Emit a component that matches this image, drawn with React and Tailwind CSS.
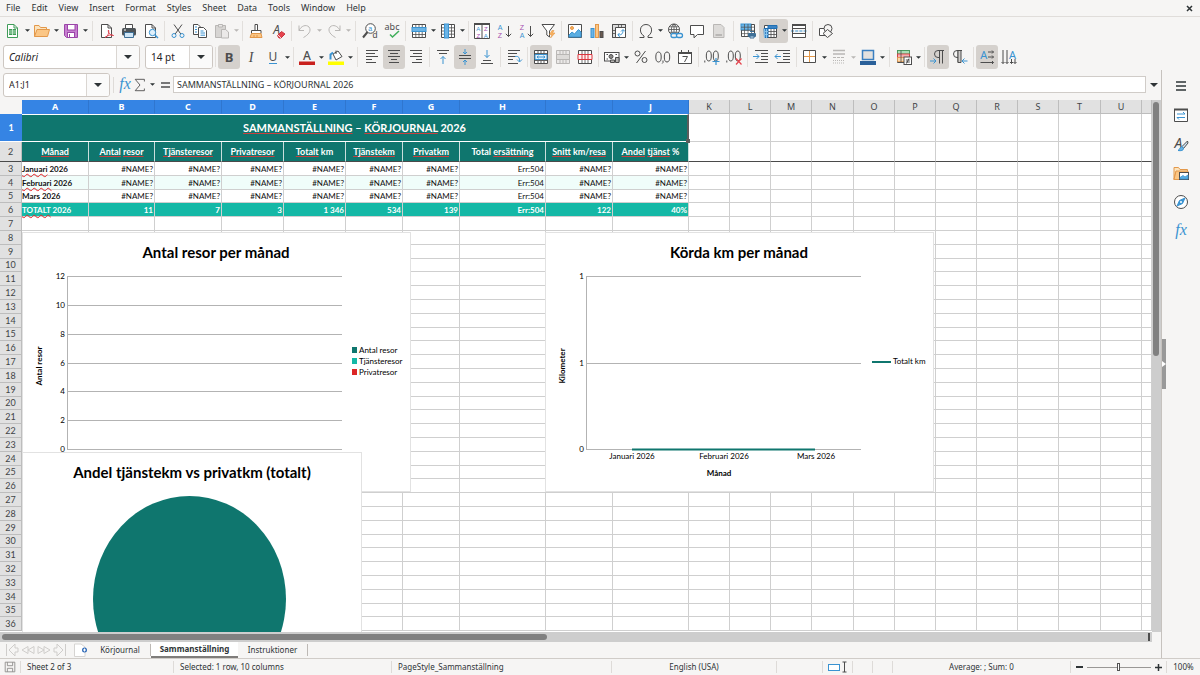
import { Fragment } from "react";
import clsx from "clsx";

const DARK = "#4d4d4d";
const BLUE = "#3a93d1";
const GREY = "#b9b7b5";

const menus = ["File", "Edit", "View", "Insert", "Format", "Styles", "Sheet", "Data", "Tools", "Window", "Help"];

const Glyph = ({ x = 8, y = 13, size = 14, fill = DARK, children, ...rest }) => (
  <text x={x} y={y} fontSize={size} fill={fill} stroke="none" textAnchor="middle" {...rest}>
    {children}
  </text>
);

const SmallGlyph = (props) => <Glyph size={7} className="font-['Liberation_Sans',sans-serif]" {...props} />;

const lines = (list) => list.map(([x1, x2, y]) => `M${x1} ${y}H${x2}`).join("");

const icons = {
  new: (
    <>
      <path d="M2.500 1.500H9l3.500 3.500V14.500H2.500Z" fill="#fff" stroke="#3f9c58" />
      <path d="M9 1.500V5h3.500" stroke="#3f9c58" />
      <rect x="4" y="6" width="7" height="6" fill="#3f9c58" stroke="none" />
      <path d="M4 8h7M4 10h7M7.500 6v6" stroke="#d4f0da" strokeWidth=".8" />
    </>
  ),
  open: (
    <>
      <path d="M.5 13.500V2.500H5l1.500 2H12.500V7" fill="#fbe3bd" stroke="#e3984a" />
      <path d="M.5 13.500 3 6.500H15.500L13.500 13.500Z" fill="#fbc685" stroke="#e3984a" />
    </>
  ),
  save: (
    <>
      <path d="M1.500 1.500H14.500V14.500H3.500L1.500 12.500Z" fill="#c77fd0" stroke="#9b45a8" />
      <rect x="4.500" y="1.500" width="7.500" height="5.500" fill="#fff" stroke="#9b45a8" />
      <rect x="4.500" y="9.500" width="7" height="5" fill="#fff" stroke="#9b45a8" />
      <path d="M6.500 11v3" stroke="#9b45a8" />
    </>
  ),
  pdf: (
    <>
      <path d="M2.500 1.500H9l3.500 3.500V14.500H2.500Z" fill="#fff" />
      <path d="M9 1.500V5h3.500" />
      <path d="M6 14.500c4-2 4-6 3.500-7.500-1 2 2 6 5 5.500-2-1.500-6 0-8.500 2" stroke="#dd3d4b" />
    </>
  ),
  print: (
    <>
      <path d="M4.500 5V1.500h7V5" fill="#fff" />
      <rect x="1" y="5" width="14" height="7.500" rx="1.500" fill="#4d5357" stroke="none" />
      <path d="M3.500 9.500h9v5h-9z" fill="#cfe6f7" stroke="#3e6f96" />
      <path d="M3 7h2" stroke="#fff" />
    </>
  ),
  preview: (
    <>
      <path d="M2.500 1.500H9l3.500 3.500V14.500H2.500Z" fill="#fff" />
      <path d="M9 1.500V5h3.500" />
      <circle cx="9.500" cy="9.500" r="3.200" fill="#e0f0fb" stroke={BLUE} />
      <path d="M12 12l3 3" stroke={BLUE} strokeWidth="1.500" />
    </>
  ),
  cut: (
    <>
      <path d="M4 1.500 10.800 11M12 1.500 5.200 11" />
      <circle cx="4" cy="12.500" r="2" stroke={BLUE} />
      <circle cx="12" cy="12.500" r="2" stroke={BLUE} />
    </>
  ),
  copy: (
    <>
      <path d="M1.500 1.500H6L9 4.500V11.500H1.500Z" fill="#fff" />
      <path d="M6.500 4.500H11.500L14.500 7.500V14.500H6.500Z" fill="#fff" />
      <path d="M3 4h2M3 6.500h2M3 9h2M8.500 8h3M8.500 10h4.500M8.500 12.200h4.500" stroke={BLUE} />
    </>
  ),
  paste: (
    <>
      <path d="M1.500 2.500H11.500V14.500H1.500Z" fill="#d7d5d3" stroke={GREY} />
      <path d="M4.500 1.500h4v2.500h-4zM7.500 6.500h4l3 2.500v6h-7z" fill="#ebe9e8" stroke={GREY} />
    </>
  ),
  brush: (
    <>
      <path d="M7 1.500h2.500v6H7z" fill="#fff" />
      <path d="M3.500 7.500h9.500v3H3.500z" fill="#fff" />
      <path d="M3.500 10.500 2 14.500H14L13 10.500Z" fill="#fbc685" stroke="#e3984a" />
      <path d="M6 12v2M9 12v2" stroke="#e3984a" />
    </>
  ),
  clear: (
    <>
      <Glyph x={6.500} y={11} size={12} fontStyle="italic">A</Glyph>
      <path d="M7.500 12.500 11.500 8.500 15 11 11 15H9Z" fill="#e6444e" stroke="#c9353f" />
      <path d="M8 12l3 3" stroke="#fff" strokeWidth=".8" />
    </>
  ),
  undo: <path d="M2 2.500V7.500H7M2 7.500C4 3 9 1 12 4 15 8 11 12 6.500 14.500" stroke={GREY} />,
  redo: <path d="M14 2.500V7.500H9M14 7.500C12 3 7 1 4 4 1 8 5 12 9.500 14.500" stroke={GREY} />,
  find: (
    <>
      <circle cx="8.500" cy="5.500" r="4.800" fill="#fff" />
      <path d="M5.500 9 1 14.500" strokeWidth="2" />
      <SmallGlyph x={8.200} y={7.800} fill={BLUE}>a</SmallGlyph>
      <SmallGlyph x={13} y={15} size={9}>d</SmallGlyph>
    </>
  ),
  spell: (
    <>
      <Glyph x={8} y={7} size={9}>abc</Glyph>
      <path d="M6 11.500l2.500 2.500L15 8" stroke="#3fae5a" strokeWidth="1.500" />
    </>
  ),
  row: (
    <>
      <path d="M1.500 1.500h13v13h-13z" fill="#fff" />
      <path d="M1 11.500h14M4.800 1v14M8 1v14M11.200 1v14" strokeWidth=".8" />
      <rect x="1" y="4.500" width="14" height="4" fill="#6bb4e6" stroke={BLUE} />
    </>
  ),
  column: (
    <>
      <path d="M1.500 1.500h13v13h-13z" fill="#fff" />
      <path d="M1 4.800h14M1 8h14M1 11.200h14M11.500 1v14" strokeWidth=".8" />
      <rect x="4.500" y="1" width="4" height="14" fill="#6bb4e6" stroke={BLUE} />
    </>
  ),
  sort: (
    <>
      <path d="M.5 1.500h15v14H.5z" fill="#fff" />
      <path d="M0 1h16" strokeWidth="2" />
      <path d="M8 2v13" />
      <SmallGlyph x={4.300} y={8} size={6} fill={BLUE}>A</SmallGlyph>
      <SmallGlyph x={4.300} y={15} size={6} fill="#a54fb0">Z</SmallGlyph>
      <SmallGlyph x={11.800} y={8} size={6} fill="#a54fb0">Z</SmallGlyph>
      <SmallGlyph x={11.800} y={15} size={6} fill={BLUE}>A</SmallGlyph>
    </>
  ),
  sortAsc: (
    <>
      <SmallGlyph x={4} y={6.500} fill={BLUE}>A</SmallGlyph>
      <SmallGlyph x={4} y={15} fill="#a54fb0">Z</SmallGlyph>
      <path d="M12.500 3v10.500M9.800 10.800l2.700 2.700 2.700-2.700" />
    </>
  ),
  sortDesc: (
    <>
      <SmallGlyph x={4} y={6.500} fill="#a54fb0">Z</SmallGlyph>
      <SmallGlyph x={4} y={15} fill={BLUE}>A</SmallGlyph>
      <path d="M12.500 3v10.500M9.800 10.800l2.700 2.700 2.700-2.700" />
    </>
  ),
  filter: (
    <>
      <path d="M2 1.500H14.500L9.500 8v6L6.800 12V8Z" fill="#fff" />
      <path d="M12 7.500 9.500 11.500H12L10.500 15 15 10H12.500L14 7.500Z" fill="#fbb25e" stroke="#e3984a" strokeWidth=".6" />
    </>
  ),
  image: (
    <>
      <path d="M1.500 1.500h13v13h-13z" fill="#fff" />
      <circle cx="5" cy="5" r="1.500" fill="#fbb25e" stroke="#e3984a" />
      <path d="M2 14V12L5 9l2.500 2L11.500 6.500 14 9V14Z" fill="#5aaee2" stroke={BLUE} />
    </>
  ),
  chart: (
    <>
      <rect x="2" y="5.500" width="3" height="9" fill="#6bb4e6" stroke={BLUE} />
      <rect x="6.500" y="1.500" width="3" height="13" fill="#fbc685" stroke="#e3984a" />
      <rect x="11" y="8.500" width="3" height="6" fill="#6b5a50" stroke={DARK} />
    </>
  ),
  pivot: (
    <>
      <path d="M1.500 1.500h13v13h-13z" fill="#fff" />
      <path d="M1.500 1.500h13v3h-10v10h-3z" fill="#dcdcdc" />
      <path d="M7.500 1.500v3M10.500 1.500v3M1.500 7.500h3M1.500 10.500h3" strokeWidth=".8" />
      <path d="M7 12c4 0 5-1.500 5-5M10 8.500 12 6.500l2 2M8.500 10 6.800 12l2 1.800" stroke={BLUE} />
    </>
  ),
  omega: <path d="M1.500 14.500H6V13C.5 10 1.500 1.500 8 1.500S15.500 10 10 13v1.500h4.500" />,
  link: (
    <>
      <circle cx="7" cy="6.500" r="5.500" fill="#fff" />
      <path d="M1.500 6.500h11M7 1v11M2.500 3.800h9M2.500 9.300h9M7 1C3.500 3.500 3.500 9.500 7 12M7 1c3.500 2.500 3.500 8.500 0 11" strokeWidth=".8" />
      <rect x="4" y="10.500" width="6" height="4" rx="2" fill="#f6f5f4" stroke={BLUE} strokeWidth="1.300" />
      <rect x="9.500" y="10.500" width="6" height="4" rx="2" fill="#f6f5f4" stroke={BLUE} strokeWidth="1.300" />
    </>
  ),
  comment: <path d="M1.500 2.500h13v9H8.500L5 14.800V11.500H1.500Z" fill="#fff" />,
  header: (
    <>
      <path d="M2.500 1.500H10l3 3V14.500H2.500Z" fill="#dddbd9" stroke={GREY} />
      <path d="M4.500 12h6.500" stroke={GREY} strokeWidth="2" />
    </>
  ),
  printArea: (
    <>
      <path d="M1.500 1.500h13v12h-13z" fill="#fff" />
      <rect x="1" y="1" width="10" height="6" fill="#6bb4e6" stroke={BLUE} />
      <path d="M1 4.200h14M1 7.400h14M1 10.600h14M4.500 1v13M8 1v13M11.500 1v13" strokeWidth=".7" />
      <rect x="8" y="10" width="8" height="4" rx="1" fill="#3e6f96" stroke="none" />
      <path d="M10 8.500h4M10 13h4v2h-4z" fill="#cfe6f7" stroke="#3e6f96" />
    </>
  ),
  freeze: (
    <>
      <path d="M2.500 2.500h12v12h-12z" fill="#fff" />
      <path d="M6 8.500h9M6 11.500h9M9 5v10M12 5v10" strokeWidth=".8" />
      <path d="M2 5.500h13v-3h-9v12H2.500z" fill="#3a83c4" stroke="#1f6fb3" />
      <path d="M2.500 6v9M4.500 6v9M3 8.500h3M3 11.500h3" stroke="#9bd0f3" strokeWidth=".8" />
    </>
  ),
  split: (
    <>
      <path d="M1.500 1.500h13v4h-13zM1.500 10.500h13v4h-13z" fill="#fff" />
      <path d="M1 2h14" strokeWidth="2" />
      <path d="M0 8h16" stroke={BLUE} strokeDasharray="3 1.200" />
      <path d="M1.500 5v6M14.500 5v6" />
    </>
  ),
  draw: (
    <>
      <path d="M1.500 5.500h7v7h-7z" fill="#fff" />
      <circle cx="10" cy="5.500" r="4" fill="#f6f5f4" />
      <path d="M9.500 6.500 14.500 10.500 9.500 14.500 5 10.500Z" fill="#f6f5f4" />
    </>
  ),
  bold: <Glyph size={13} fontWeight="700">B</Glyph>,
  italic: <Glyph size={14} fontStyle="italic" className="font-['Liberation_Serif',serif]">I</Glyph>,
  underline: (
    <>
      <Glyph y={12} size={12}>U</Glyph>
      <path d="M4 14.500h8" stroke={BLUE} />
    </>
  ),
  fontColor: (
    <>
      <Glyph y={11} size={12} fontWeight="500">A</Glyph>
      <rect x="0" y="12.500" width="16" height="3.500" fill="#c9211e" stroke="none" />
    </>
  ),
  fill: (
    <>
      <path d="M5 5 10 2l4 5.500-6 3.500Z" fill="#fff" />
      <path d="M8 5V1.500" />
      <path d="M2.500 10.500V5.500L5 3.500" stroke={BLUE} strokeWidth="2" />
      <rect x="0" y="12.500" width="16" height="3.500" fill="#ffff00" stroke="none" />
    </>
  ),
  left: <path d={lines([[2, 14, 1.500], [2, 11, 4.500], [2, 14, 7.500], [2, 8, 10.500], [2, 12, 13.500]])} />,
  center: <path d={lines([[2, 14, 1.500], [4, 12, 4.500], [2, 14, 7.500], [5, 11, 10.500], [3, 13, 13.500]])} />,
  right: <path d={lines([[2, 14, 1.500], [5, 14, 4.500], [2, 14, 7.500], [8, 14, 10.500], [4, 14, 13.500]])} />,
  top: (
    <>
      <path d={lines([[2, 14, 1.500], [4, 12, 4.500]])} />
      <path d="M8 15V7.500M5.500 10 8 7.500l2.500 2.500" stroke={BLUE} />
    </>
  ),
  middle: (
    <>
      <path d={lines([[2, 14, 6.500], [2, 14, 9.500]])} />
      <path d="M8 0v5M6 3l2 2 2-2M8 16v-5M6 13l2-2 2 2" stroke={BLUE} />
    </>
  ),
  bottom: (
    <>
      <path d={lines([[4, 12, 11.500], [2, 14, 14.500]])} />
      <path d="M8 1v7.500M5.500 6 8 8.500 10.500 6" stroke={BLUE} />
    </>
  ),
  wrap: (
    <>
      <path d={lines([[2, 14, 1.500], [2, 11, 4.500], [2, 9, 7.500], [2, 7, 10.500], [2, 12, 14.500]])} />
      <path d="M9 7.500c4-.500 4.500 1 4.500 5M11 10.500l2.500 2.500 2.500-2.500" stroke={BLUE} />
    </>
  ),
  merge: (
    <>
      <path d="M1.500 1.500h13v13h-13z" fill="#fff" />
      <path d="M5 1v4M8 1v4M11 1v4M5 12v3M8 12v3M11 12v3M1 4.500h14M1 11.500h14" strokeWidth=".9" />
      <path d="M2 5.500h12v5H2z" fill="#e3f1fb" stroke={BLUE} />
      <path d="M4 8h8M5.500 6.800 4 8l1.500 1.200M10.500 6.800 12 8l-1.500 1.200" stroke={BLUE} />
    </>
  ),
  mergeOff: (
    <>
      <path d="M1.500 1.500h13v13h-13zM5 1v4.500M8 1v4.500M11 1v4.500M5 11v4M8 11v4M11 11v4" fill="#ebe9e8" stroke={GREY} />
      <path d="M1.500 5.500h13v5h-13z" fill="#dddbd9" stroke={GREY} />
    </>
  ),
  unmerge: (
    <>
      <path d="M1.500 1.500h13v13h-13z" fill="#fff" />
      <path d="M5 1v14M8 1v14M11 1v14" strokeWidth=".8" />
      <path d="M1 5.500h14v5H1zM5 5.500v5M8 5.500v5M11 5.500v5" fill="#fdf0f0" stroke="#d9363e" />
    </>
  ),
  currency: (
    <>
      <rect x=".5" y="3.500" width="14.500" height="8.500" fill="#fff" />
      <circle cx="7" cy="7.500" r="2" fill="#8d8b89" />
      <path d="M2.500 5.500h1.500M2.500 10h1.500M11.500 5.500H13" />
      <path d="M11.500 8.500h3.500v5h-3.500zM6.500 11h4v2.500h-4z" fill="#b5b3b1" />
    </>
  ),
  percent: (
    <>
      <circle cx="4.500" cy="4.500" r="2.500" />
      <circle cx="11.500" cy="11" r="2.500" />
      <path d="M12.500 2 3.500 14" />
    </>
  ),
  number: (
    <>
      <ellipse cx="3.500" cy="8" rx="2.700" ry="5" />
      <ellipse cx="12" cy="8" rx="2.700" ry="5" />
      <path d="M8 11.500v2l-.8 1" />
    </>
  ),
  date: (
    <>
      <path d="M1.500 3.500h13v11h-13zM4.500 1v3M11.500 1v3" fill="#fff" />
      <path d="M1 4h14" strokeWidth="2" />
      <path d="M5.500 7.500h5L7.500 13" />
    </>
  ),
  decimalAdd: (
    <>
      <path d="M.8 11.500v2" />
      <ellipse cx="4.800" cy="7" rx="2.500" ry="5" />
      <ellipse cx="11.800" cy="7" rx="2.500" ry="5" />
      <path d="M8.500 12.500h7M12 9v7" stroke={BLUE} strokeWidth="1.200" />
    </>
  ),
  decimalRemove: (
    <>
      <path d="M.8 11.500v2" />
      <ellipse cx="4.800" cy="7" rx="2.500" ry="5" />
      <ellipse cx="11.800" cy="7" rx="2.500" ry="5" />
      <path d="M10 9.500 15.500 15.500M15.500 9.500 10 15.500" stroke="#e6444e" strokeWidth="1.200" />
    </>
  ),
  indent: (
    <>
      <path d={lines([[2, 15, 1.500], [8, 15, 4.500], [8, 15, 7.500], [8, 15, 10.500], [2, 15, 13.500]])} />
      <path d="M0 7.500h6M3.500 5 6 7.500 3.500 10" stroke={BLUE} />
    </>
  ),
  outdent: (
    <>
      <path d={lines([[2, 15, 1.500], [8, 15, 4.500], [8, 15, 7.500], [8, 15, 10.500], [2, 15, 13.500]])} />
      <path d="M0 7.500h6M2.500 5 0 7.500 2.500 10" stroke={BLUE} />
    </>
  ),
  borders: (
    <>
      <path d="M1.500 1.500h12v12h-12z" fill="#fff" />
      <path d="M7.500 2v11M2 7.500h11" stroke="#e3984a" />
    </>
  ),
  borderStyle: (
    <>
      <path d={lines([[2, 14, 1.500], [2, 14, 5]])} stroke={GREY} strokeWidth="1.500" />
      <path d="M2 8.500h12" stroke={GREY} strokeDasharray="3 1" />
      <path d="M2 11.500h12M2 14h12" stroke={GREY} strokeDasharray="1 1" />
    </>
  ),
  borderColor: (
    <>
      <path d="M2.500 1.500h11v9h-11z" fill="#e3e1df" stroke="#3a7fc0" strokeWidth="1.500" />
      <rect x="0" y="12" width="16" height="4" fill="#2a6099" stroke="none" />
    </>
  ),
  conditional: (
    <>
      <path d="M1.500 1.500h12v12h-12z" fill="#fff" />
      <rect x="1.500" y="1.500" width="12" height="3.500" fill="#a9dfb6" stroke="#3f9c58" strokeWidth=".8" />
      <rect x="1.500" y="5" width="12" height="3.500" fill="#f3b0b0" stroke="#d9363e" strokeWidth=".8" />
      <path d="M1.500 8.500h12v4h-12z" fill="#fbd9ad" stroke="#e3984a" strokeWidth=".8" />
      <path d="M5 1.500v12" strokeWidth=".8" />
      <rect x="8" y="8" width="7.500" height="7.500" fill="#fff" />
      <path d="M9.800 11h4M9.800 13h4M13 9.500 10.500 14.500" />
    </>
  ),
  ltr: (
    <>
      <path d="M14 1.500H8a3.500 3.500 0 0 0 0 7h1.500M9.500 1.500v13M12.500 1.500v13" />
      <path d="M0 12h6M3.500 9.500 6 12 3.500 14.500" stroke={BLUE} />
    </>
  ),
  rtl: (
    <>
      <path d="M10 1.500H5a3.500 3.500 0 0 0 0 7h1M6 1.500v12" />
      <path d="M6 1.500h3v12H6z" fill="#cfcdcb" />
      <path d="M15.500 12h-5.500M12.500 9.500 10 12l2.500 2.500" stroke={BLUE} />
    </>
  ),
  textH: (
    <>
      <Glyph x={4.800} y={9.500} size={11} fill={BLUE}>A</Glyph>
      <path d="M9 3h5.500M9 8h5.500M1.500 13.500h13M13 1.500 14.500 3 13 4.500M13 6.500 14.500 8 13 9.500M13 12l1.500 1.500L13 15" />
    </>
  ),
  textV: (
    <>
      <Glyph x={11.500} y={9.500} size={11} fill={BLUE}>A</Glyph>
      <path d="M2 1v13.500M6 1v13.500M10.500 10v4.500M14 10v4.500M.5 13 2 14.500 3.500 13M4.500 13 6 14.500 7.500 13M9 13l1.500 1.500L12 13M12.500 13l1.500 1.500 1.500-1.500" />
    </>
  ),
  properties: (
    <>
      <path d="M1.500 2.500h13v12h-13z" fill="#fff" />
      <path d="M1 2.500h14" strokeWidth="2" />
      <path d="M4 7h8M4 10.500h8M10 5 12 7M6 12.500 4 10.500" stroke={BLUE} />
    </>
  ),
  styles: (
    <>
      <Glyph x={5.500} y={11.500} size={14} fontStyle="italic">A</Glyph>
      <path d="M14.500 5 9 10.500l1.500 2L15 7Z" fill="#cfe6f7" />
      <path d="M9 10.500c-2 0-2 3-4 4 3 .5 5.500 0 5.500-2Z" fill="#6bb4e6" stroke={BLUE} />
    </>
  ),
  gallery: (
    <>
      <path d="M1 14.500V2.500H5.500L7 4.500H14.500V6M1 14.500 3 6.500" fill="#fbe3bd" stroke="#e3984a" />
      <path d="M1 14.500 3 6h12v8.500z" fill="#fbc685" stroke="#e3984a" />
      <rect x="6.500" y="7.500" width="9" height="7" fill="#fff" />
      <path d="M7 14v-1.500L10 10.500l2 1.500 3-2V14Z" fill="#5aaee2" stroke={BLUE} strokeWidth=".8" />
    </>
  ),
  navigator: (
    <>
      <circle cx="8" cy="8" r="6.500" fill="#fff" />
      <path d="M12 4 9.500 9.500 4 12 6.500 6.500Z" fill={BLUE} stroke={BLUE} />
      <circle cx="8" cy="8" r="1" fill="#fff" stroke="none" />
    </>
  ),
  functions: (
    <Glyph y={12} size={16} fill={BLUE} fontStyle="italic" className="font-['Liberation_Serif',serif]">fx</Glyph>
  ),
  sigma: <path d="M13 4V1.500H2.500L8 8l-5.500 6.500H13V12" />,
  equals: <path d="M4 6h9M4 10h9" strokeWidth="1.500" />,
  menu: <path d="M3 4h10M3 8h10M3 12h10" stroke="#2e3436" strokeWidth="1.500" />,
  disk: <path d="M2.500 2.500h11v11h-11zM5 2.500v4h6v-4M5 13.500v-4h6v4" stroke="#8d8b89" />,
};

const Icon = ({ name, className = "size-4" }) => (
  <svg viewBox="0 0 16 16" className={clsx("shrink-0 overflow-visible font-['Noto_Sans',sans-serif]", className)} fill="none" stroke={DARK} aria-hidden="true">
    {icons[name]}
  </svg>
);

const Caret = ({ muted, big }) => (
  <svg viewBox="0 0 8 4" className={big ? "h-1 w-2" : "h-[3px] w-[5px]"} fill={muted ? "#b9b7b5" : "#2e3436"} aria-hidden="true">
    <path d="M0 0h8L4 4z" />
  </svg>
);

// "|" and "||" are separators, "*" marks a pressed button, "v" a drop-down, "-" a disabled drop-down
const standardBar = [
  "new v", "open v", "save v", "||", "pdf", "print", "preview", "|", "cut", "copy", "paste -", "|",
  "brush", "clear", "|", "undo -", "redo -", "||", "find", "spell", "|", "row v", "column v", "|",
  "sort", "sortAsc", "sortDesc", "filter", "|", "image", "chart", "pivot", "|", "omega v", "link",
  "comment", "header", "||", "printArea", "freeze v*", "split", "|", "draw",
];

const formatBar = [
  "|", "bold *", "italic", "underline v", "|", "fontColor v", "fill v", "||", "left", "center *", "right", "|",
  "top", "middle *", "bottom", "|", "wrap", "|", "merge *", "mergeOff", "unmerge", "|", "currency v",
  "percent", "number", "date", "|", "decimalAdd", "decimalRemove", "|", "indent", "outdent", "|",
  "borders v", "borderStyle -", "borderColor v", "||", "conditional v", "|", "ltr *", "rtl", "|",
  "textH *", "textV",
];

const ToolItems = ({ items }) =>
  items.map((item, i) => {
    if (item === "|") return <span key={i} className="mx-0.5 h-5 w-px shrink-0 bg-[#e2dfdc]" />;
    if (item === "||") return <span key={i} className="mx-[3px] h-5 w-px shrink-0 bg-[#e2dfdc]" />;
    const [name, flags = ""] = item.split(" ");
    const drop = flags.includes("v") || flags.includes("-");
    return (
      <div key={i} className={clsx("flex h-6 shrink-0 items-center rounded-[3px]", flags.includes("*") && "bg-[#d5d1cd]")}>
        <button type="button" aria-label={name} className="flex h-6 w-[22px] items-center justify-center">
          <Icon name={name} />
        </button>
        {drop && (
          <button type="button" aria-label={`${name} options`} className="flex h-6 w-[7px] items-center justify-center">
            <Caret muted={flags.includes("-")} />
          </button>
        )}
      </div>
    );
  });

const Combo = ({ label, value, className, inputClass = "text-[10px]" }) => (
  <div className={clsx("flex h-6 shrink-0 overflow-hidden rounded-[3px] border border-[#cdc7c2] bg-white", className)}>
    <input aria-label={label} defaultValue={value} className={clsx("min-w-0 flex-1 px-[5px] text-[#1f2326] outline-none", inputClass)} />
    <button type="button" aria-label={`${label} list`} className="flex w-[23px] items-center justify-center border-l border-[#dad6d2] bg-[#fafafa]">
      <Caret big />
    </button>
  </div>
);

const columns = [
  ["A", "w-[67px]"], ["B", "w-[66px]"], ["C", "w-[67px]"], ["D", "w-[62px]"], ["E", "w-[62px]"],
  ["F", "w-[57px]"], ["G", "w-[57px]"], ["H", "w-[86px]"], ["I", "w-[67px]"], ["J", "w-[76px]"],
  ["K", "w-[41px]"], ["L", "w-[41px]"], ["M", "w-[41px]"], ["N", "w-[42px]"], ["O", "w-[41px]"],
  ["P", "w-[41px]"], ["Q", "w-[41px]"], ["R", "w-[41px]"], ["S", "w-[41px]"], ["T", "w-[42px]"],
  ["U", "w-[41px]"], ["", ""],
];

// words inside [ ] are flagged by the spell checker
const headings = [
  "[Månad]", "[Antal] [resor]", "[Tjänsteresor]", "[Privatresor]", "[Totalt] km", "[Tjänstekm]", "[Privatkm]",
  "Total [ersättning]", "[Snitt] km/[resa]", "[Andel] [tjänst] %",
];

const name = "#NAME?";
const monthValues = [name, name, name, name, name, name, "Err:504", name, name];
const dataRows = {
  3: ["[Januari] 2026", ...monthValues],
  4: ["[Februari] 2026", ...monthValues],
  5: ["Mars 2026", ...monthValues],
  6: ["[TOTALT] 2026", "11", "7", "3", "1 346", "534", "139", "Err:504", "122", "40%"],
};

const wavy = "underline decoration-[#e8262a] decoration-wavy decoration-1 underline-offset-1 [text-decoration-skip-ink:none]";
const solid = "underline decoration-[#c8403f] decoration-1 underline-offset-1 [text-decoration-skip-ink:none]";

const Spelled = ({ text, mark = wavy }) =>
  text.split(/(\[[^\]]+\])/).map((part, i) =>
    part.startsWith("[") ? (
      <span key={i} className={mark}>{part.slice(1, -1)}</span>
    ) : (
      <Fragment key={i}>{part}</Fragment>
    )
  );

const gridRows = Array.from({ length: 34 }, (_, i) => i + 3);

const RowHead = ({ n }) => (
  <th scope="row" className="border-r border-b border-[#bdbdbd] bg-[#e1e1e1] text-center text-[9px] font-normal text-[#3f4447]">
    {n}
  </th>
);

function Grid() {
  return (
    <table className="w-full table-fixed border-separate border-spacing-0 font-['Lato',sans-serif] text-[8px] leading-3 whitespace-nowrap [&_th]:p-0">
      <colgroup>
        <col className="w-[22px]" />
        {columns.map(([letter, width], i) => (
          <col key={i} className={width} />
        ))}
      </colgroup>
      <thead className="font-['Noto_Sans',sans-serif] text-[9px]">
        <tr className="h-[14px]">
          <td className="bg-[#f6f5f4] p-0" />
          {columns.map(([letter], i) => (
            <th
              key={i}
              scope="col"
              className={clsx(
                "border-r border-b",
                i < 10 ? "border-[#2f76cf] border-b-[#3584e4] bg-[#3584e4] font-bold text-white" : "border-[#bdbdbd] bg-[#e1e1e1] font-normal text-[#3f4447]"
              )}
            >
              {letter}
            </th>
          ))}
        </tr>
      </thead>
      <tbody>
        <tr className="h-7">
          <th scope="row" className="border-b border-white bg-[#3584e4] text-[9px] font-bold text-white">1</th>
          <td colSpan={10} className="relative border-y border-r-2 border-white border-r-[#5c5c5c] bg-[#0f766e] p-0 text-center text-[11px] leading-4 font-bold text-white">
            <Spelled text="[SAMMANSTÄLLNING] – [KÖRJOURNAL] 2026" mark={solid} />
            <span className="absolute -right-[3px] -bottom-0.5 z-10 size-1 bg-[#5c5c5c]" />
          </td>
          {columns.slice(10).map((_, i) => (
            <td key={i} className="border-r border-b border-[#cfcfcf] p-0" />
          ))}
        </tr>
        <tr className="h-5">
          <th scope="row" className="border-r border-b border-r-[#bdbdbd] border-b-[#4a4a4a] bg-[#e1e1e1] text-[9px] font-normal text-[#3f4447]">2</th>
          {headings.map((text) => (
            <td key={text} className="border-r border-b border-r-[#c9dedc] border-b-[#4a4a4a] bg-[#0f766e] p-0 text-center text-[9px] font-bold text-white">
              <Spelled text={text} mark={solid} />
            </td>
          ))}
          {columns.slice(10).map((_, i) => (
            <td key={i} className="border-r border-b border-r-[#cfcfcf] border-b-[#4a4a4a] p-0" />
          ))}
        </tr>
        {gridRows.map((n) => (
          <tr key={n} className={n % 5 === 0 ? "h-[13px]" : "h-[14px]"}>
            <RowHead n={n} />
            {columns.map((_, i) => (
              <td
                key={i}
                className={clsx(
                  "border-r border-b border-[#cfcfcf]",
                  i > 0 ? "py-0 pr-px pl-0 text-right" : "p-0",
                  i < 10 && n === 4 && "bg-[#f0fdfa]",
                  i < 10 && n === 6 ? "bg-[#14b8a6] font-bold text-white" : "text-[#111]",
                  i === 0 && n < 6 && "font-bold"
                )}
              >
                {dataRows[n]?.[i] && <Spelled text={dataRows[n][i]} />}
              </td>
            ))}
          </tr>
        ))}
      </tbody>
    </table>
  );
}

const ChartTitle = ({ x, children }) => (
  <text x={x} y="26" textAnchor="middle" fontSize="15" fontWeight="700">{children}</text>
);

function TripsChart() {
  return (
    <svg viewBox="1 1 387 258" className="absolute top-[132px] left-[22px] h-[260px] w-[389px] border border-[#e2e2e2] bg-white font-['Lato',sans-serif]" fontSize="8">
      <ChartTitle x={194}>Antal resor per månad</ChartTitle>
      {[12, 10, 8, 6, 4, 2, 0].map((tick, i) => (
        <g key={tick}>
          <path d={`M45 ${44 + i * 29 - Math.floor(i / 4)}.5H320`} stroke="#b3b3b3" />
          <text x="43" y={47 + i * 29 - Math.floor(i / 4)} textAnchor="end">{tick}</text>
        </g>
      ))}
      <path d="M45.500 44v174" stroke="#b3b3b3" />
      <text transform="translate(20 134) rotate(-90)" textAnchor="middle" fontWeight="700">Antal resor</text>
      {[["Antal resor", "#0f766e"], ["Tjänsteresor", "#14b8a6"], ["Privatresor", "#dc2626"]].map(([label, color], i) => (
        <g key={label}>
          <rect x="330" y={115 + i * 11} width="5" height="6" fill={color} />
          <text x="337" y={121 + i * 11}>{label}</text>
        </g>
      ))}
    </svg>
  );
}

function DistanceChart() {
  return (
    <svg viewBox="1 1 387 258" className="absolute top-[132px] left-[545px] h-[260px] w-[389px] border border-[#e2e2e2] bg-white font-['Lato',sans-serif]" fontSize="8">
      <ChartTitle x={194}>Körda km per månad</ChartTitle>
      <path d="M41 44.500H316M41 131.500H316M41 217.500H316M41.500 44v174" stroke="#b3b3b3" />
      <text x="39" y="47" textAnchor="end">1</text>
      <text x="39" y="134" textAnchor="end">1</text>
      <text x="39" y="220" textAnchor="end">0</text>
      <path d="M87 217.500H270" stroke="#0f766e" strokeWidth="2" />
      {["Januari 2026", "Februari 2026", "Mars 2026"].map((month, i) => (
        <text key={month} x={87 + i * 92} y="227" textAnchor="middle">{month}</text>
      ))}
      <text x="174" y="244" textAnchor="middle" fontWeight="700">Månad</text>
      <text transform="translate(20 134) rotate(-90)" textAnchor="middle" fontWeight="700">Kilometer</text>
      <path d="M327 130H346" stroke="#0f766e" strokeWidth="2" />
      <text x="348" y="132">Totalt km</text>
    </svg>
  );
}

function ShareChart() {
  return (
    <svg viewBox="1 1 338 258" className="absolute top-[352px] left-[22px] h-[260px] w-[340px] border border-[#e2e2e2] bg-white font-['Lato',sans-serif]">
      <ChartTitle x={170}>Andel tjänstekm vs privatkm (totalt)</ChartTitle>
      <ellipse cx="167.500" cy="147" rx="96.500" ry="103" fill="#0f766e" />
    </svg>
  );
}

const SheetTabs = () => (
  <div className="flex h-4 shrink-0 items-stretch text-[8px] leading-[14px]">
    <button type="button" aria-label="Scroll sheets" className="ml-1.5 flex w-[60px] items-center">
      <svg viewBox="0 0 60 14" className="h-[14px] w-[60px]" fill="none" stroke="#cfcdcb" aria-hidden="true">
        <path d="M.5 1v12M9 1 3 7l6 6V9h3V5H9ZM22 3.500 16 7l6 3.500ZM28 3.500 22 7l6 3.500ZM32 3.500 38 7l-6 3.500ZM38 3.500 44 7l-6 3.500ZM51 1l6 6-6 6V9h-3V5h3ZM59.500 1v12" />
      </svg>
    </button>
    <button type="button" aria-label="Add sheet" className="ml-2 flex w-4 items-center">
      <svg viewBox="0 0 16 14" className="h-[14px] w-4" fill="none" aria-hidden="true">
        <path d="M.5 1H7l4 3v9.500H.5z" fill="#fff" stroke="#d6d4d2" />
        <circle cx="10.500" cy="7" r="2.500" fill="#2f6ab8" />
        <path d="M9 7h3M10.500 5.500v3" stroke="#fff" />
      </svg>
    </button>
    <button type="button" className="my-0.5 w-[61px] border-r border-[#bdb9b5] leading-3">Körjournal</button>
    <button type="button" className="w-[87px] border-b-2 border-[#7f7d7b] bg-white font-bold">Sammanställning</button>
    <button type="button" className="my-0.5 w-[70px] border-r border-[#bdb9b5] leading-3">Instruktioner</button>
  </div>
);

const StatusCell = ({ className, children }) => (
  <div className={clsx("flex h-3 shrink-0 items-center border-r border-[#dedbd8]", className)}>{children}</div>
);

const StatusBar = () => (
  <footer className="flex h-[17px] shrink-0 items-center border-t border-[#d0ccc8] text-[8px]">
    <StatusCell className="w-[21px] justify-center"><Icon name="disk" className="size-[14px]" /></StatusCell>
    <StatusCell className="w-[153px] px-1.5">Sheet 2 of 3</StatusCell>
    <StatusCell className="w-[218px] px-1.5">Selected: 1 row, 10 columns</StatusCell>
    <StatusCell className="w-[220px] px-1.5">PageStyle_Sammanställning</StatusCell>
    <StatusCell className="w-[165px] justify-center">English (USA)</StatusCell>
    <StatusCell className="w-[46px]" />
    <StatusCell className="w-[30px] justify-center">
      <svg viewBox="0 0 20 12" className="h-3 w-5" fill="none" aria-hidden="true">
        <rect x=".5" y="3.500" width="11" height="6" fill="#fff" stroke={BLUE} />
        <path d="M14.500 1h4M14.500 11h4M16.500 1v10" stroke={DARK} />
      </svg>
    </StatusCell>
    <StatusCell className="w-5" />
    <StatusCell className="w-5" />
    <StatusCell className="min-w-0 flex-1 justify-center">Average: ; Sum: 0</StatusCell>
    <StatusCell className="w-24 justify-center gap-1">
      <button type="button" aria-label="Zoom out" className="h-0.5 w-[7px] bg-[#2e3436]" />
      <input
        type="range"
        aria-label="Zoom"
        defaultValue="50"
        className="h-2 w-16 appearance-none bg-[linear-gradient(#9a9896,#9a9896)] bg-[length:100%_1px] bg-center bg-no-repeat [&::-webkit-slider-thumb]:h-2 [&::-webkit-slider-thumb]:w-[3px] [&::-webkit-slider-thumb]:appearance-none [&::-webkit-slider-thumb]:border [&::-webkit-slider-thumb]:border-[#555] [&::-webkit-slider-thumb]:bg-white"
      />
      <button type="button" aria-label="Zoom in">
        <svg viewBox="0 0 7 7" className="size-[7px]" stroke="#2e3436" strokeWidth="1.500" aria-hidden="true">
          <path d="M0 3.500h7M3.500 0v7" />
        </svg>
      </button>
    </StatusCell>
    <span className="w-[33px] shrink-0 text-center">100%</span>
  </footer>
);

export default function App() {
  return (
    <div className="flex h-screen flex-col overflow-hidden bg-[#f6f5f4] font-['Noto_Sans',sans-serif] text-[#2e3436]">
      <header className="flex h-[17px] shrink-0 items-center border-b border-[#e0ddda] text-[9px]">
        <nav className="flex flex-1 gap-px pl-px">
          {menus.map((menu) => (
            <button key={menu} type="button" className="px-[5px]">{menu}</button>
          ))}
        </nav>
        <button type="button" aria-label="Close" className="mr-[7px]">
          <svg viewBox="0 0 7 7" className="size-[7px]" stroke="#2e3436" strokeWidth="1.500" aria-hidden="true">
            <path d="M1 1l5 5M6 1 1 6" />
          </svg>
        </button>
      </header>

      <div className="flex h-[27px] shrink-0 items-center pl-0.5">
        <ToolItems items={standardBar} />
      </div>

      <div className="flex h-[26px] shrink-0 items-center pl-[3px]">
        <Combo label="Font name" value="Calibri" className="mr-[5px] w-[137px]" inputClass="text-[10px] italic" />
        <Combo label="Font size" value="14 pt" className="w-[68px]" />
        <ToolItems items={formatBar} />
      </div>

      <div className="flex min-h-0 flex-1">
        <main className="flex min-w-0 flex-1 flex-col">
          <div className="flex h-[30px] shrink-0 items-center pb-px pl-[3px]">
            <Combo label="Name box" value="A1:J1" className="w-[107px]" inputClass="text-[9px]" />
            <span className="mx-[3px] h-4 w-px shrink-0 bg-[#dedbd8]" />
            <button type="button" aria-label="Function wizard"><Icon name="functions" /></button>
            <button type="button" aria-label="Sum" className="mr-0.5 flex items-center gap-[3px]">
              <Icon name="sigma" className="size-[14px]" />
              <Caret />
            </button>
            <button type="button" aria-label="Formula"><Icon name="equals" /></button>
            <input
              aria-label="Input line"
              defaultValue="SAMMANSTÄLLNING – KÖRJOURNAL 2026"
              className="h-[17px] min-w-0 flex-1 border border-[#d0ccc8] bg-white px-[3px] text-[9px] outline-none"
            />
            <button type="button" aria-label="Expand formula bar" className="flex w-[15px] justify-center"><Caret big /></button>
          </div>

          <div className="flex min-h-0 flex-1">
            <div className="relative min-w-0 flex-1 overflow-hidden bg-white">
              <Grid />
              <TripsChart />
              <DistanceChart />
              <ShareChart />
            </div>
            <div className="w-[9px] shrink-0 bg-[#cdcdcd] px-px pt-0.5">
              <div className="h-[48%] w-1.5 rounded-full bg-[#808080]" />
            </div>
          </div>

          <div className="mr-[9px] flex h-2.5 shrink-0 items-center justify-between bg-[#cdcdcd] px-0.5">
            <div className="h-1.5 w-19/40 rounded-full bg-[#808080]" />
            <div className="h-2 w-0.5 bg-[#4d4d4d]" />
          </div>
          <SheetTabs />
        </main>

        <aside className="relative flex w-[39px] shrink-0 flex-col items-center gap-[13px] border-l border-[#c6c2be] pt-2">
          {["menu", "properties", "styles", "gallery", "navigator", "functions"].map((item) => (
            <button key={item} type="button" aria-label={item}><Icon name={item} /></button>
          ))}
          <button type="button" aria-label="Collapse sidebar" className="absolute top-[269px] left-0 flex h-[50px] w-1 items-center bg-[#999]">
            <svg viewBox="0 0 4 6" className="h-1.5 w-1" fill="#fff" aria-hidden="true"><path d="M0 0l4 3-4 3z" /></svg>
          </button>
        </aside>
      </div>

      <StatusBar />
    </div>
  );
}
